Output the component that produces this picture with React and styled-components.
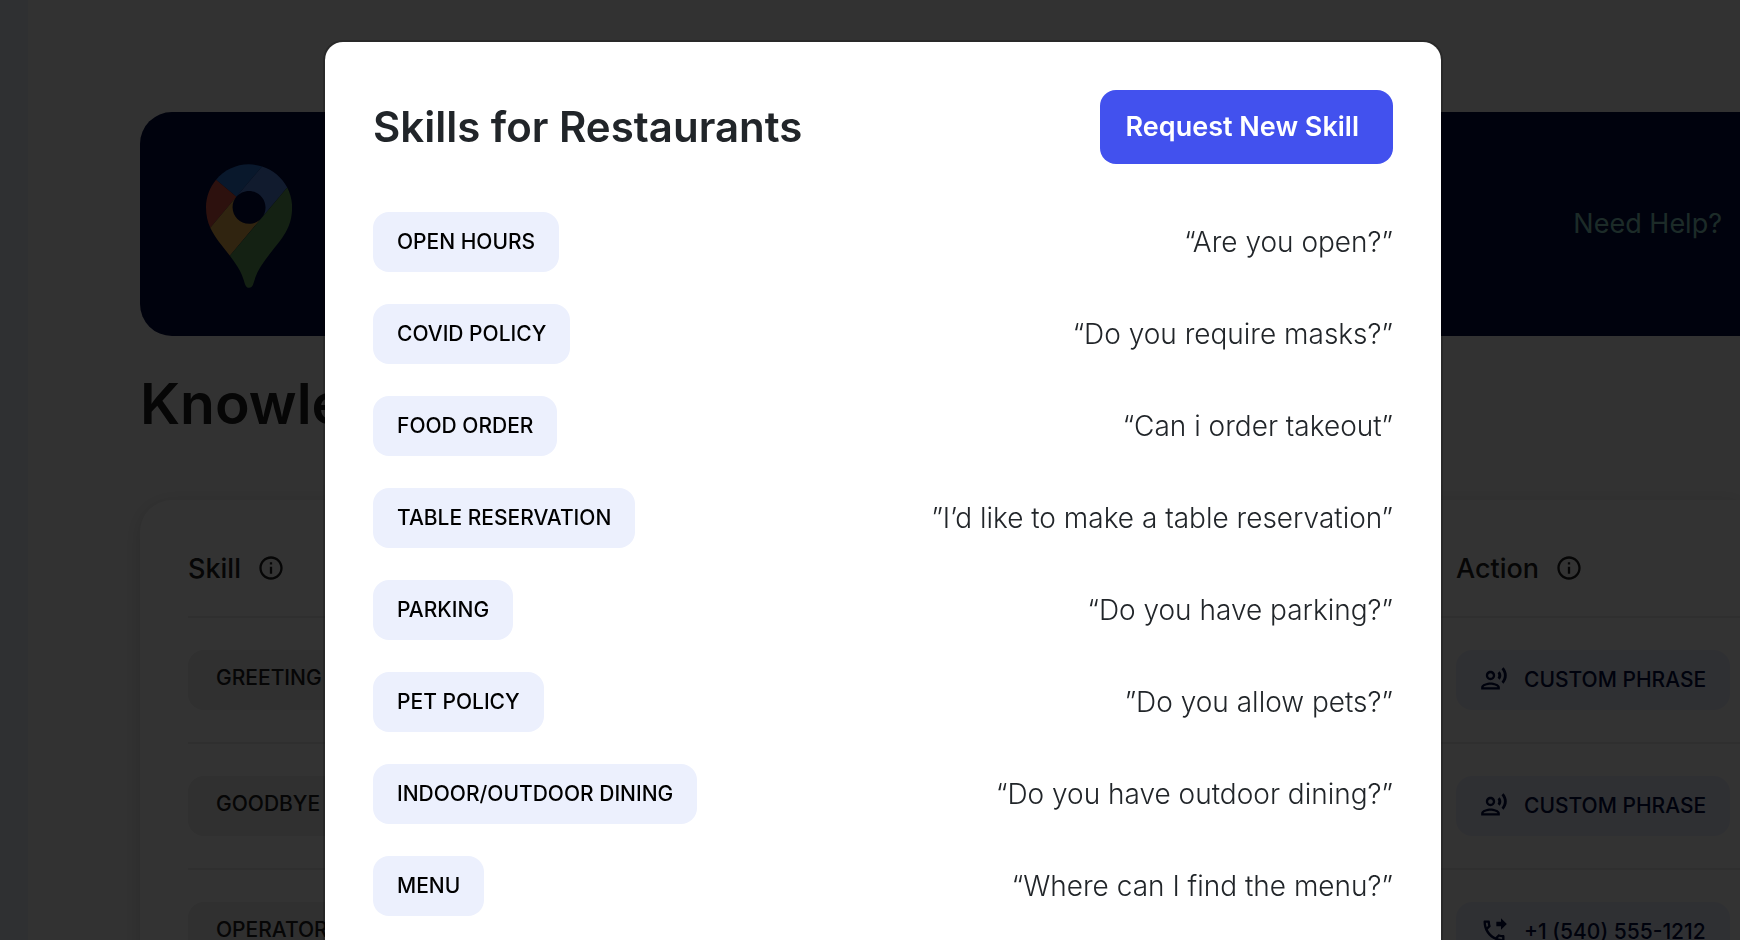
import React from 'react'
import styled, { createGlobalStyle, ThemeProvider } from 'styled-components'
import { MdOutlineInfo, MdOutlinePhoneForwarded, MdOutlineRecordVoiceOver } from 'react-icons/md'

const theme = {
    colors: {
        page: '#fafafa',
        surface: '#ffffff',
        sidebar: '#e9f1f8',
        navy: '#000a40',
        primary: '#4251ee',
        chip: '#ecf0fd',
        chipMuted: '#ededed',
        line: '#ececec',
        heading: '#212529',
        text: '#212529',
        dark: '#202020',
        help: '#8cd7c8'
    },
    sizes: {
        textSM: '21px',
        textMD: '27px',
        textLG: '42px',
        textXL: '57px'
    },
    spaces: {
        s1: '16px',
        s2: '24px',
        s3: '32px',
        s4: '48px'
    }
}

const skills = [
    { name: 'OPEN HOURS', phrase: '“Are you open?”' },
    { name: 'COVID POLICY', phrase: '“Do you require masks?”' },
    { name: 'FOOD ORDER', phrase: '“Can i order takeout”' },
    { name: 'TABLE RESERVATION', phrase: '”I’d like to make a table reservation”' },
    { name: 'PARKING', phrase: '“Do you have parking?”' },
    { name: 'PET POLICY', phrase: '”Do you allow pets?”' },
    { name: 'INDOOR/OUTDOOR DINING', phrase: '“Do you have outdoor dining?”' },
    { name: 'MENU', phrase: '“Where can I find the menu?”' }
]

const knowledge = [
    { skill: 'GREETING', action: 'CUSTOM PHRASE', icon: MdOutlineRecordVoiceOver },
    { skill: 'GOODBYE', action: 'CUSTOM PHRASE', icon: MdOutlineRecordVoiceOver },
    { skill: 'OPERATOR', action: '+1 (540) 555-1212', icon: MdOutlinePhoneForwarded }
]

function MapPin() {
    return (
        <PinSvg width="86" height="124" viewBox="0 0 92.3 132.3" aria-hidden="true">
            <path fill="#2d78dc" d="M60.2 2.2C55.8.8 51 0 46.1 0 32 0 19.3 6.4 10.8 16.5l21.8 18.3L60.2 2.2z"/>
            <path fill="#e15546" d="M10.8 16.5C4.1 24.5 0 34.9 0 46.1c0 8.7 1.7 15.7 4.6 22l28-33.3-21.8-18.3z"/>
            <path fill="#5587e6" d="M46.2 28.5c9.8 0 17.7 7.9 17.7 17.7 0 4.3-1.6 8.3-4.2 11.4 0 0 13.9-16.6 27.5-32.7-5.6-10.8-15.3-19-27-22.7L32.6 34.8c3.3-3.8 8.1-6.3 13.6-6.3"/>
            <path fill="#f0b450" d="M46.2 63.8c-9.8 0-17.7-7.9-17.7-17.7 0-4.3 1.5-8.3 4.1-11.3l-28 33.3c4.8 10.6 12.8 19.2 21 29.9l34.1-40.5c-3.3 3.9-8.1 6.3-13.5 6.3"/>
            <path fill="#64a55f" d="M59.1 109.2c15.4-24.1 33.3-35 33.3-63 0-7.7-1.9-14.9-5.2-21.3L25.6 98c2.6 3.4 5.3 7.3 7.9 11.3 9.4 14.5 6.8 23.1 12.8 23.1s3.4-8.7 12.8-23.2"/>
        </PinSvg>
    )
}

function KnowledgeTable() {
    return (
        <Card>
            <Table>
                <thead>
                    <tr>
                        <HeadCell>
                            <HeadLabel>Skill <MdOutlineInfo size={28}/></HeadLabel>
                        </HeadCell>
                        <HeadCell $action>
                            <HeadLabel>Action <MdOutlineInfo size={28}/></HeadLabel>
                        </HeadCell>
                    </tr>
                </thead>
                <tbody>
                    {knowledge.map(({ skill, action, icon: Icon }) => (
                        <tr key={skill}>
                            <Cell>
                                <TableChip $muted>{skill}</TableChip>
                            </Cell>
                            <Cell>
                                <TableChip><Icon size={28}/>{action}</TableChip>
                            </Cell>
                        </tr>
                    ))}
                </tbody>
            </Table>
        </Card>
    )
}

function SkillsModal() {
    return (
        <Overlay>
            <Modal role="dialog" aria-modal="true" aria-labelledby="skills-title">
                <ModalHeader>
                    <ModalTitle id="skills-title">Skills for Restaurants</ModalTitle>
                    <RequestButton type="button">Request New Skill</RequestButton>
                </ModalHeader>
                <SkillList>
                    {skills.map(({ name, phrase }) => (
                        <SkillRow key={name}>
                            <Chip>{name}</Chip>
                            <Phrase>{phrase}</Phrase>
                        </SkillRow>
                    ))}
                </SkillList>
            </Modal>
        </Overlay>
    )
}

function App() {
    return (
        <ThemeProvider theme={theme}>
            <GlobalStyle/>
            <Shell>
                <Sidebar/>
                <Main>
                    <Banner>
                        <MapPin/>
                        <HelpLink href="#help">Need Help?</HelpLink>
                    </Banner>
                    <PageTitle>Knowledge Base</PageTitle>
                    <KnowledgeTable/>
                </Main>
            </Shell>
            <SkillsModal/>
        </ThemeProvider>
    )
}

const GlobalStyle = createGlobalStyle`
  * {
    box-sizing: border-box;
  }

  body {
    margin: 0;
    overflow: hidden;
    background: ${({ theme }) => theme.colors.page};
    color: ${({ theme }) => theme.colors.text};
    font-family: Inter, 'Liberation Sans', sans-serif;
  }
`

const Shell = styled.div`
  display: flex;
  height: 100vh;
  overflow: hidden;
`

const Sidebar = styled.aside`
  flex: 0 0 28px;
  background: ${({ theme }) => theme.colors.sidebar};
`

const Main = styled.main`
  flex: 1;
  min-width: 0;
  padding: 112px 0 0 112px;
`

const Banner = styled.section`
  display: flex;
  align-items: center;
  justify-content: space-between;
  height: 224px;
  padding: 0 18px 0 66px;
  border-radius: 32px 0 0 32px;
  background: ${({ theme }) => theme.colors.navy};
`

const PinSvg = styled.svg`
  margin-top: 4px;
`

const HelpLink = styled.a`
  padding-bottom: 2px;
  color: ${({ theme }) => theme.colors.help};
  font-size: ${({ theme }) => theme.sizes.textMD};
  text-decoration: none;
`

const PageTitle = styled.h1`
  margin: 32px 0 60px;
  color: ${({ theme }) => theme.colors.dark};
  font-size: ${({ theme }) => theme.sizes.textXL};
  font-weight: 600;
  line-height: 72px;
`

const Card = styled.section`
  padding: 0 0 ${({ theme }) => theme.spaces.s4} ${({ theme }) => theme.spaces.s4};
  border-radius: 32px 0 0 0;
  background: ${({ theme }) => theme.colors.surface};
  box-shadow: 0 4px 20px rgba(0, 0, 0, 0.16);
`

const Table = styled.table`
  width: 100%;
  border-collapse: separate;
  border-spacing: 0;
`

const HeadCell = styled.th`
  width: ${({ $action }) => ($action ? '284px' : 'auto')};
  height: 118px;
  padding: 20px 0 0;
  border-bottom: 2px solid ${({ theme }) => theme.colors.line};
  text-align: left;
`

const HeadLabel = styled.span`
  display: flex;
  align-items: center;
  gap: ${({ theme }) => theme.spaces.s1};
  color: ${({ theme }) => theme.colors.dark};
  font-size: ${({ theme }) => theme.sizes.textMD};
  font-weight: 500;
`

const Cell = styled.td`
  height: 126px;
  padding: 0;
  border-bottom: 2px solid ${({ theme }) => theme.colors.line};
`

const Chip = styled.span`
  display: flex;
  align-items: center;
  width: fit-content;
  height: 60px;
  padding: 0 ${({ theme }) => theme.spaces.s2} 2px;
  border-radius: 16px;
  background: ${({ theme }) => theme.colors.chip};
  color: #000000;
  font-size: ${({ theme }) => theme.sizes.textSM};
  font-weight: 500;
  white-space: nowrap;
`

const TableChip = styled(Chip)`
  gap: ${({ theme }) => theme.spaces.s1};
  padding: ${({ $muted }) => ($muted ? '0 28px 6px' : '0 24px 2px')};
  background: ${({ theme, $muted }) => ($muted ? theme.colors.chipMuted : theme.colors.chip)};
  color: ${({ theme, $muted }) => ($muted ? theme.colors.dark : theme.colors.navy)};
`

const Overlay = styled.div`
  position: fixed;
  inset: 0;
  display: flex;
  align-items: flex-start;
  justify-content: center;
  padding: 40px 0 0 26px;
  overflow: hidden;
  background: rgba(0, 0, 0, 0.8);
`

const Modal = styled.section`
  width: 100%;
  max-width: 1120px;
  padding: ${({ theme }) => theme.spaces.s4};
  border: 2px solid rgba(0, 0, 0, 0.2);
  border-radius: 20px;
  background: ${({ theme }) => theme.colors.surface};
  background-clip: padding-box;
`

const ModalHeader = styled.header`
  display: flex;
  align-items: center;
  justify-content: space-between;
  margin-bottom: ${({ theme }) => theme.spaces.s4};
`

const ModalTitle = styled.h2`
  margin: 0;
  padding-bottom: 2px;
  color: ${({ theme }) => theme.colors.heading};
  font-size: ${({ theme }) => theme.sizes.textLG};
  font-weight: 600;
`

const RequestButton = styled.button`
  height: 74px;
  padding: 0 34px 2px 26px;
  border: 0;
  border-radius: 16px;
  background: ${({ theme }) => theme.colors.primary};
  color: #ffffff;
  font-family: inherit;
  font-size: ${({ theme }) => theme.sizes.textMD};
  font-weight: 600;
  cursor: pointer;
`

const SkillList = styled.ul`
  display: flex;
  flex-direction: column;
  gap: ${({ theme }) => theme.spaces.s3};
  margin: 0;
  padding: 0 0 92px;
  list-style: none;
`

const SkillRow = styled.li`
  display: flex;
  align-items: center;
  justify-content: space-between;
`

const Phrase = styled.span`
  font-size: 28px;
  font-weight: 300;
`

export default App
